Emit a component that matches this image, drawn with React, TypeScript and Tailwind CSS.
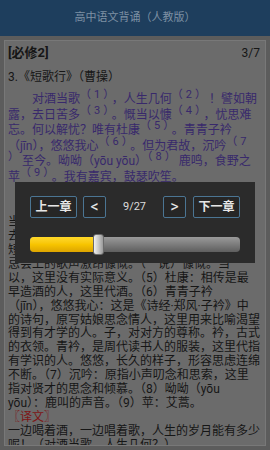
import React from 'react';

const FONT = "font-['Roboto','Noto_Sans_CJK_SC',sans-serif]";

type Seg = string | { sup: string };

const poem: Seg[][] = [
  ['　　对酒当歌', { sup: '（1）' }, '，人生几何', { sup: '（2）' }, '！譬如朝'],
  ['露，去日苦多', { sup: '（3）' }, '。慨当以慷', { sup: '（4）' }, '，忧思难'],
  ['忘。何以解忧？唯有杜康', { sup: '（5）' }, '。青青子衿'],
  ['（jīn），悠悠我心', { sup: '（6）' }, '。但为君故，沉吟', { sup: '（7' }],
  [{ sup: '）' }, '至今。呦呦（yōu yōu）', { sup: '（8）' }, '鹿鸣，食野之'],
  ['苹', { sup: '（9）' }, '。我有嘉宾，鼓瑟吹笙。'],
];

const notes: { text: string; red?: boolean }[] = [
  { text: '〖注释〗', red: true },
  { text: '（1）当：对着。（2）几何：多少。（3）去' },
  { text: '当：指过去的日子。苦多：苦于太多（苦）' },
  { text: '去日苦多：有慨叹人生短暂之意。见诸三' },
  { text: '短歌：古乐府曲名。（4）慨当以慷：指宴' },
  { text: '忌会上的歌声激昂慷慨。（一说）慷慨。当' },
  { text: '以，这里没有实际意义。（5）杜康：相传是最' },
  { text: '早造酒的人，这里代酒。（6）青青子衿' },
  { text: '（jīn），悠悠我心：这是《诗经·郑风·子衿》中' },
  { text: '的诗句，原写姑娘思念情人，这里用来比喻渴望' },
  { text: '得到有才学的人。子，对对方的尊称。衿，古式' },
  { text: '的衣领。青衿，是周代读书人的服装，这里代指' },
  { text: '有学识的人。悠悠，长久的样子，形容思虑连绵' },
  { text: '不断。（7）沉吟：原指小声叨念和思索，这里' },
  { text: '指对贤才的思念和倾慕。（8）呦呦（yōu' },
  { text: 'yōu）：鹿叫的声音。（9）苹：艾蒿。' },
  { text: '〖译文〗', red: true },
  { text: '一边喝着酒，一边唱着歌，人生的岁月能有多少' },
  { text: '呢！（对酒当歌，人生几何？）' },
];

function NavButton({ label, wide, className = '' }: { label: string; wide?: boolean; className?: string }) {
  return (
    <button
      className={`h-[22px] border border-[#4b7593] rounded-[2px] bg-[#262626] text-[#e6e6e6] flex items-center justify-center ${
        wide ? 'w-[47px] text-[12px] font-bold' : 'w-[23px] text-[16px] leading-none'
      } ${className}`}
    >
      {label}
    </button>
  );
}

export default function App() {
  const page = 9;
  const total = 27;
  const pct = ((page - 1) / (total - 1)) * 100;

  return (
    <div className={`relative w-[270px] h-[450px] overflow-hidden bg-[#5c5c5c] ${FONT}`}>
      {/* Title bar */}
      <div className="h-[36px] bg-[#1e3e5d] flex items-center justify-center">
        <span className="text-[11px] text-[#7d90a4]">高中语文背诵（人教版）</span>
      </div>

      {/* Content card */}
      <div className="p-[4px]">
        <div className="h-[406px] overflow-hidden bg-[#6b6b6b] border border-[#787878] pl-[3px] pr-[5px] pt-[3px] text-[12px] text-[#161616]">
          <div className="h-[18px] flex items-center justify-between">
            <span className="font-bold text-[13px]">[必修2]</span>
            <span className="text-[12px]">3/7</span>
          </div>
          <div className="mt-[6px] h-[18px] flex items-center whitespace-nowrap">3.《短歌行》（曹操）</div>

          <div className="mt-[6px] text-[#38296b]">
            {poem.map((line, i) => (
              <div key={i} className="leading-[15.6px] h-[15.6px] whitespace-nowrap">
                {line.map((s, j) =>
                  typeof s === 'string' ? (
                    <span key={j}>{s}</span>
                  ) : (
                    <sup key={j} className="text-[11px] tracking-[3px] -top-[5px]">
                      {s.sup}
                    </sup>
                  )
                )}
              </div>
            ))}
          </div>

          <div className="mt-[3px]">
            {notes.map((n, i) => (
              <div
                key={i}
                className={`leading-[13.9px] h-[13.9px] whitespace-nowrap ${n.red ? 'text-[#7e1515]' : ''}`}
              >
                {n.text}
              </div>
            ))}
          </div>
        </div>
      </div>

      {/* Chapter jump dialog */}
      <div className="absolute top-[182px] left-[15px] w-[240px] h-[81px] bg-[#2b2b2b] px-[15px] pt-[14px]">
        <div className="flex items-center h-[22px]">
          <NavButton label="上一章" wide />
          <NavButton label="<" className="ml-[6px]" />
          <span className="flex-1 text-center text-[11px] text-[#dcdcdc]">
            {page}/{total}
          </span>
          <NavButton label=">" />
          <NavButton label="下一章" wide className="ml-[7px]" />
        </div>

        <div className="mt-[19px] h-[15px] rounded-[4px] bg-gradient-to-b from-[#9a9a9a] via-[#7c7c7c] to-[#5e5e5e] flex items-center">
          <div
            className="h-full rounded-l-[4px] bg-gradient-to-b from-[#ffd928] via-[#f7c400] to-[#dca400]"
            style={{ width: `${pct}%` }}
          />
          <div className="-ml-[2px] w-[11px] h-[21px] shrink-0 rounded-[3px] border border-[#6a6a6a] bg-gradient-to-r from-[#f0f0f0] via-[#c8c8c8] to-[#9a9a9a]" />
        </div>
      </div>
    </div>
  );
}
